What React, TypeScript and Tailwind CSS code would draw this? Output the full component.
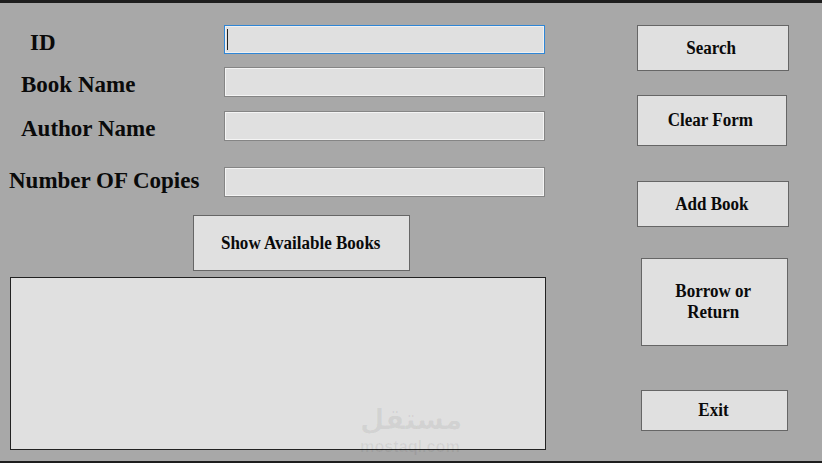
const serif = "font-['Liberation_Serif',serif] font-bold text-[#0a0a0a]";

function FormRow({ label, labelClass, rowClass, active }: { label: string; labelClass: string; rowClass: string; active?: boolean }) {
  return (
    <div className={`flex items-center ${rowClass}`}>
      <label className={`w-[224px] shrink-0 text-[23px] leading-none ${labelClass}`}>{label}</label>
      {active ? (
        <div className="flex h-full w-[321px] items-center border border-[#2f86d6] bg-[#e0e0e0] pl-[2px] shadow-[inset_0_0_0_1px_#f0f0f0]">
          <div className="h-[21px] w-px bg-[#222]" />
        </div>
      ) : (
        <div className="h-full w-[321px] border border-[#858585] bg-[#e0e0e0] shadow-[inset_0_0_0_1px_#f4f4f4]" />
      )}
    </div>
  );
}

function FormButton({ className, children }: { className: string; children: React.ReactNode }) {
  return (
    <button className={`flex shrink-0 items-center justify-center border-[1.5px] border-[#666] bg-[#e0e0e0] text-center text-[18.5px] leading-[21px] ${className}`}>
      <span className="scale-x-[0.92]">{children}</span>
    </button>
  );
}

export default function App() {
  return (
    <div className={`flex h-[463px] w-[822px] flex-col overflow-hidden bg-[#a8a8a8] ${serif}`}>
      <div className="h-[3px] shrink-0 bg-[#1e1e1e]" />
      <div className="flex flex-1">
        <div className="flex w-[637px] shrink-0 flex-col">
          <FormRow label="ID" labelClass="pl-[30px] pt-[5px]" rowClass="mt-[22px] h-[29px]" active />
          <FormRow label="Book Name" labelClass="pl-[21px] pt-[5px]" rowClass="mt-[13px] h-[30px]" />
          <FormRow label="Author Name" labelClass="pl-[21px] pt-[5px]" rowClass="mt-[14px] h-[30px]" />
          <FormRow label="Number OF Copies" labelClass="pl-[9px] pb-[3px] whitespace-nowrap" rowClass="mt-[26px] h-[30px]" />
          <FormButton className="mt-[18px] ml-[193px] h-[56px] w-[217px] pr-[2px]">Show Available Books</FormButton>
          <div className="relative mt-[6px] ml-[10px] h-[173px] w-[536px] border border-[#222] bg-[#e0e0e0]">
            <span className="absolute top-[124px] left-[349px] font-['DejaVu_Sans',sans-serif] text-[28px] leading-[36px] font-bold text-[#0000000f]" dir="rtl">مستقل</span>
            <span className="absolute top-[160px] left-[349px] font-['Liberation_Sans',sans-serif] text-[16.2px] leading-[17px] font-bold text-[#0000000f]">mostaql.com</span>
          </div>
        </div>
        <div className="flex flex-1 flex-col">
          <FormButton className="mt-[22px] h-[46px] w-[152px] pr-[3px]">Search</FormButton>
          <FormButton className="mt-[24px] h-[51px] w-[150px] pr-[3px]">Clear Form</FormButton>
          <FormButton className="mt-[35px] h-[46px] w-[152px] pr-[3px]">Add Book</FormButton>
          <FormButton className="mt-[31px] ml-[4px] h-[88px] w-[147px] pr-[2px]">Borrow or<br />Return</FormButton>
          <FormButton className="mt-[44px] ml-[4px] h-[41px] w-[147px] pr-[2px]">Exit</FormButton>
        </div>
      </div>
      <div className="h-[2px] shrink-0 bg-[#1e1e1e]" />
    </div>
  );
}
